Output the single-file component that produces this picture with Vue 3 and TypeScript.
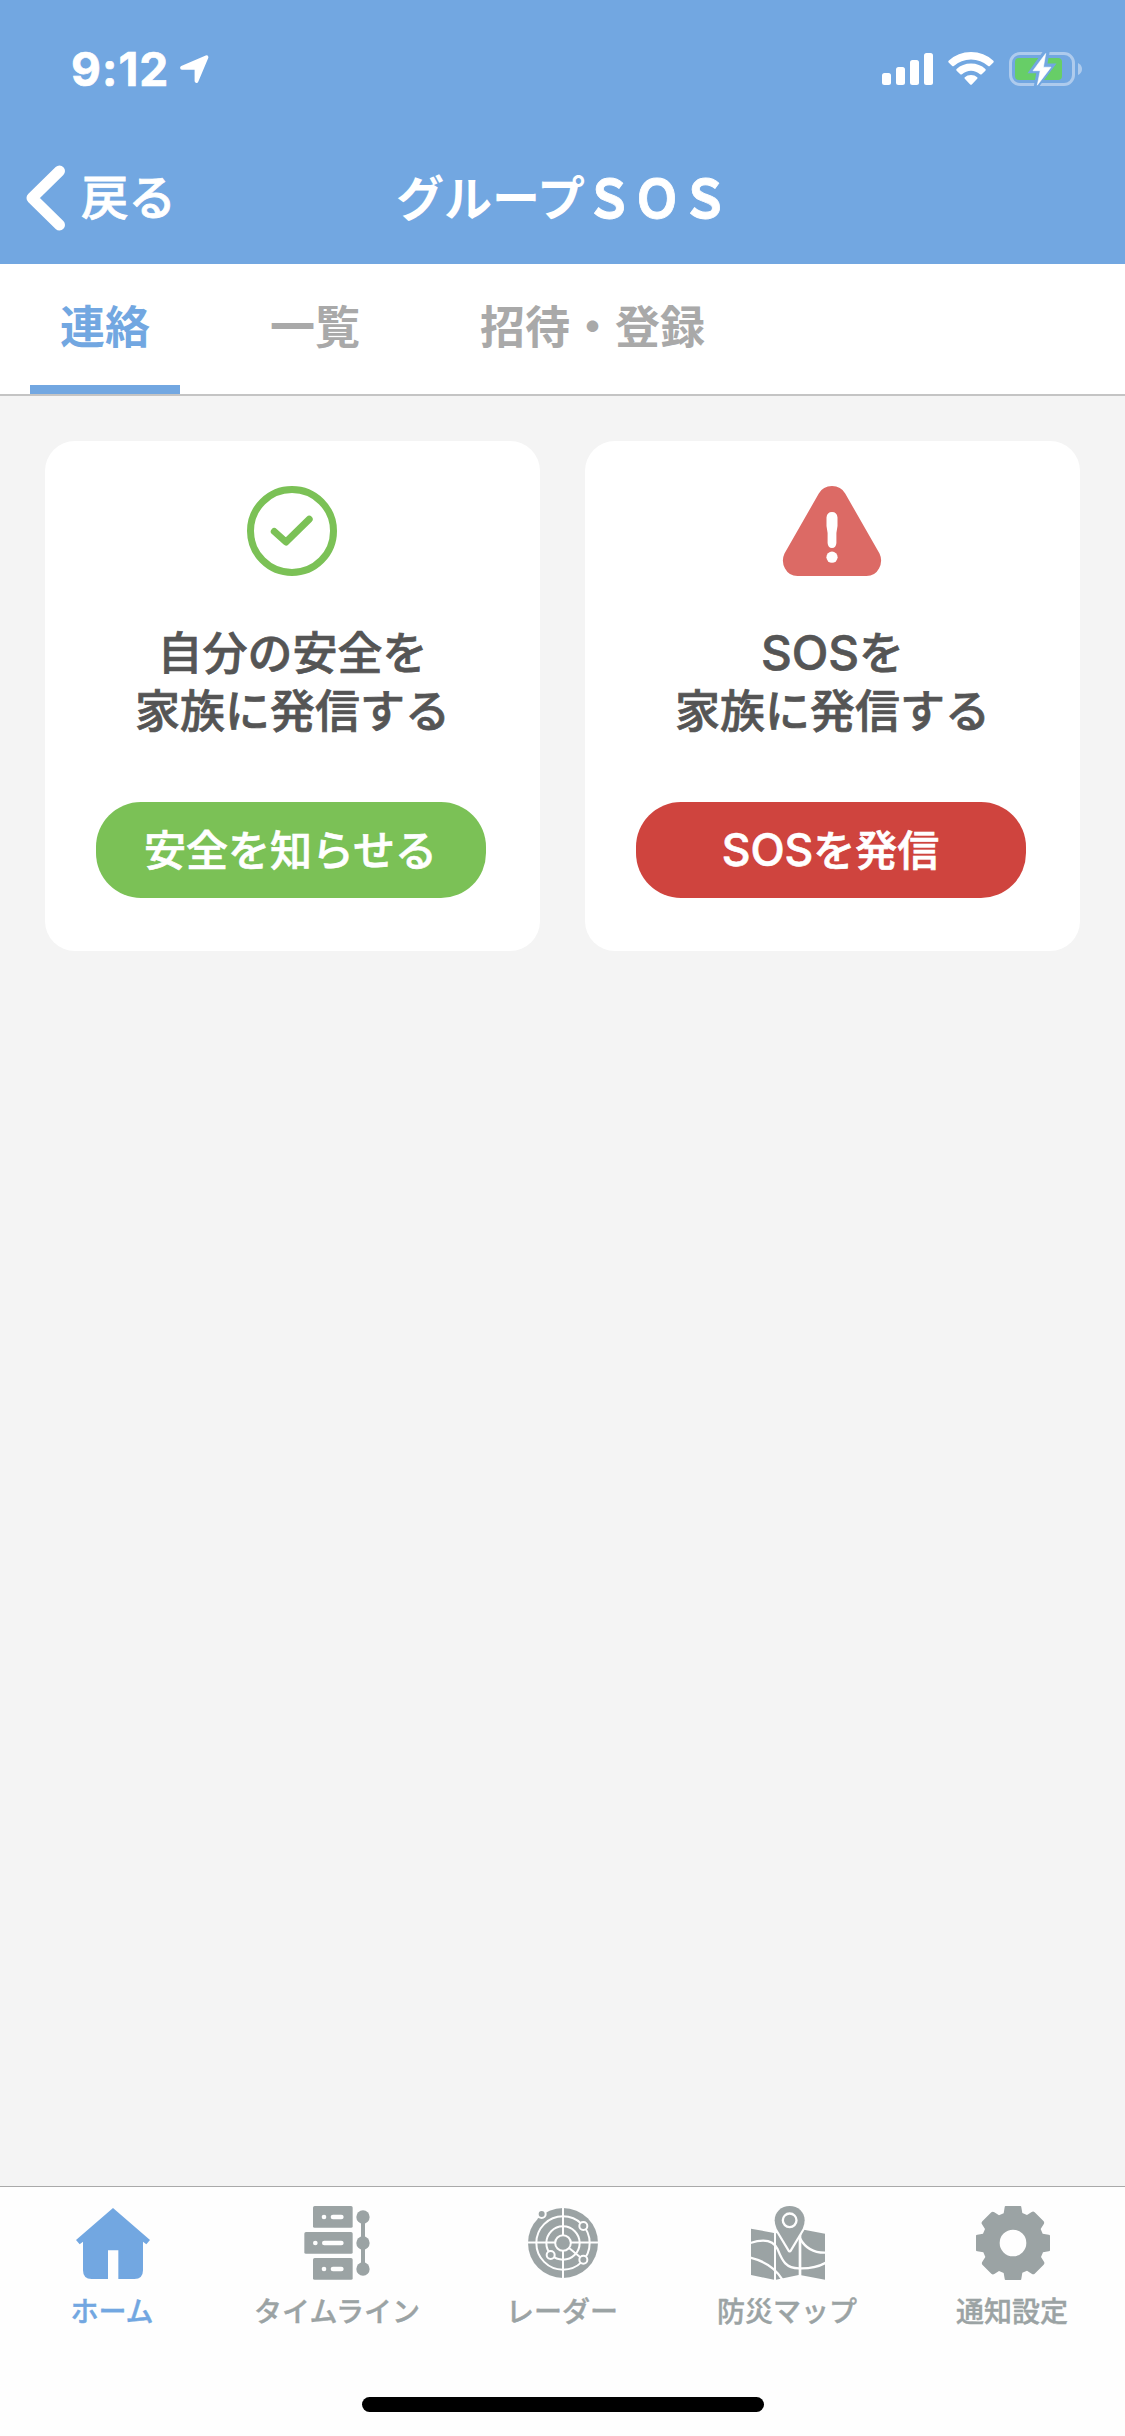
<script setup lang="ts">
interface Tab {
  label: string
  active: boolean
}

interface NavItem {
  id: string
  label: string
  viewBox: string
}

const tabs: Tab[] = [
  { label: '連絡', active: true },
  { label: '一覧', active: false },
  { label: '招待・登録', active: false },
]

const navItems: NavItem[] = [
  { id: 'home', label: 'ホーム', viewBox: '105 108 225 222' },
  { id: 'timeline', label: 'タイムライン', viewBox: '780 108 225 222' },
  { id: 'radar', label: 'レーダー', viewBox: '135 108 225 222' },
  { id: 'map', label: '防災マップ', viewBox: '810 108 225 222' },
  { id: 'settings', label: '通知設定', viewBox: '-114 -111 225 222' },
]

// One quarter of the gear outline; the other three are rotations of it.
const gearQuarter: [string, number[]][] = [
  ['L', [-22, -111]],
  ['L', [22, -111]],
  ['Q', [25, -111, 25, -107]],
  ['L', [28, -90]],
  ['L', [42, -84]],
  ['L', [56, -93]],
  ['Q', [61, -96, 65, -92]],
  ['L', [92, -65]],
  ['Q', [95, -61, 92, -56]],
  ['L', [83, -42]],
  ['L', [89, -28]],
  ['L', [107, -25]],
  ['Q', [111, -25, 111, -22]],
]

function buildGear(): string {
  const parts: string[] = []
  for (let turn = 0; turn < 4; turn++) {
    for (const [command, coords] of gearQuarter) {
      const out: number[] = []
      for (let i = 0; i < coords.length; i += 2) {
        let x = coords[i]
        let y = coords[i + 1]
        for (let t = 0; t < turn; t++) [x, y] = [-y, x]
        out.push(x, y)
      }
      parts.push(command + out.join(' '))
    }
  }
  return 'M' + parts.join('').slice(1) + 'ZM40 0A40 40 0 1 0 -40 0A40 40 0 1 0 40 0Z'
}

const gearPath = buildGear()
</script>

<template>
  <div class="screen">
    <header class="header">
      <div class="status">
        <div class="status-left">
          <span class="time">9:12</span>
          <svg class="location" width="32" height="32" viewBox="0 0 32 32">
            <path d="M3 14.8L27.5 4.2L17.5 28V14.8Z" fill="#fff" stroke="#fff" stroke-width="3.8" stroke-linejoin="round" />
          </svg>
        </div>
        <svg class="indicators" width="202" height="36" viewBox="881 51 202 36">
          <g fill="#fff">
            <rect x="882" y="73" width="9" height="12" rx="2.5" />
            <rect x="896" y="67" width="9" height="18" rx="2.5" />
            <rect x="910" y="60" width="9" height="25" rx="2.5" />
            <rect x="924" y="53" width="9" height="32" rx="2.5" />
            <path d="M948.6 60.7Q958 52 971 52T993.4 60.7Q994.2 61.6 993.4 62.5L989.8 66Q989 66.6 988.2 66Q981 59.4 971 59.4T953.8 66Q953 66.6 952.2 66L948.6 62.5Q947.8 61.6 948.6 60.7Z" />
            <path d="M956.6 69Q962.5 63.5 971 63.5T985.4 69Q986.2 69.9 985.4 70.7L981.7 74.2Q981 74.9 980 74.2Q976 70.7 971 70.7T962 74.2Q961 74.9 960.3 74.2L956.6 70.7Q955.8 69.9 956.6 69Z" />
            <path d="M964.8 77.3Q967.2 75 971 75T977.2 77.3Q978 78 977.2 78.8L971.8 84.4Q971 85.2 970.2 84.4L964.8 78.8Q964 78 964.8 77.3Z" />
          </g>
          <rect x="1010.5" y="53.5" width="63" height="31" rx="9.5" fill="none" stroke="#aecbed" stroke-width="3" />
          <path d="M1078 63Q1082 65 1082 69T1078 75Z" fill="#aecbed" />
          <rect x="1015" y="58" width="47" height="22" rx="4" fill="#67ce67" />
          <path d="M1044 50L1027.5 73.3H1036.2L1033.5 88H1038L1056.5 63.5H1047.5L1050 50Z" fill="#72a7e1" />
          <path d="M1045.7 53.5L1033 70.7H1040.2L1037.3 85.2L1051 67.2H1043.4Z" fill="#fff" stroke="#fff" stroke-width=".6" />
        </svg>
      </div>
      <div class="navbar">
        <div class="back">
          <svg width="44" height="70" viewBox="24 163.5 44 70">
            <path d="M59.5 171.5L32 198.5L59.5 225.5" fill="none" stroke="#fff" stroke-width="11" stroke-linecap="round" stroke-linejoin="round" />
          </svg>
          <span>戻る</span>
        </div>
        <h1 class="title">グループ<span class="wide-latin">ＳＯＳ</span></h1>
      </div>
    </header>

    <nav class="tabs">
      <div v-for="tab in tabs" :key="tab.label" class="tab" :class="{ active: tab.active }">
        <span>{{ tab.label }}</span>
      </div>
    </nav>

    <main class="content">
      <section class="card">
        <svg class="card-icon" width="90" height="90" viewBox="0 0 90 90" fill="none" stroke="#7bc156">
          <circle cx="45" cy="45" r="41.5" stroke-width="7" />
          <path d="M27.3 45.5L39 56L62.2 33.2" stroke-width="7" stroke-linecap="round" stroke-linejoin="round" />
        </svg>
        <p class="card-text">自分の安全を<br />家族に発信する</p>
        <button class="button safe">安全を知らせる</button>
      </section>
      <section class="card">
        <svg class="card-icon" width="100" height="90" viewBox="0 0 100 90">
          <path d="M36.8 7.5Q41 0 50 0T63.2 7.5L97.5 67.5Q101 75 97 82.5T84.5 90H15.5Q7 90 3 82.5T2.5 67.5Z" fill="#dc6a65" />
          <path d="M44.5 31.5Q45 26 50 26T55.5 31.5V40L54.4 47V57Q54 62 50 62T45.6 57V47L44.5 40Z" fill="#fff" />
          <circle cx="50" cy="71.2" r="5.6" fill="#fff" />
        </svg>
        <p class="card-text"><span class="latin">SOS</span>を<br />家族に発信する</p>
        <button class="button sos"><span class="latin">SOS</span>を発信</button>
      </section>
    </main>

    <footer class="footer">
      <nav class="bottom-nav">
        <div v-for="item in navItems" :key="item.id" class="nav-item" :class="{ active: item.id === 'home' }">
          <svg width="75" height="74" :viewBox="item.viewBox" fill="currentColor">
            <path
              v-if="item.id === 'home'"
              d="M219 114L330 210L319 223L309 215V301Q309 327 283 327H235V241H204V327H155Q129 327 129 301V215L119 223L108 210Z"
            />
            <template v-else-if="item.id === 'timeline'">
              <rect x="819" y="108" width="119" height="65.5" rx="5" />
              <rect x="793" y="186" width="145" height="65.5" rx="5" />
              <rect x="819" y="264" width="119" height="65.5" rx="5" />
              <circle cx="969" cy="141" r="20" />
              <circle cx="969" cy="219" r="20" />
              <circle cx="969" cy="297" r="20" />
              <rect x="963" y="141" width="12" height="156" />
              <g fill="#fefefe">
                <circle cx="852" cy="141" r="7" />
                <circle cx="826" cy="219" r="7" />
                <circle cx="852" cy="297" r="7" />
                <rect x="872" y="134" width="39" height="14" rx="7" />
                <rect x="846" y="212" width="65" height="14" rx="7" />
                <rect x="872" y="290" width="39" height="14" rx="7" />
              </g>
            </template>
            <template v-else-if="item.id === 'radar'">
              <circle cx="249" cy="219" r="105" />
              <g fill="none" stroke="#fefefe" stroke-width="6">
                <circle cx="249" cy="219" r="80" />
                <circle cx="249" cy="219" r="50" />
                <path d="M249 110V328M140 217.5H358M249 219L310 269" />
              </g>
              <g stroke="#fefefe" stroke-width="6">
                <circle cx="249" cy="219" r="23.5" />
                <circle cx="310" cy="168" r="12" />
                <circle cx="310" cy="269" r="12" />
                <circle cx="212" cy="255" r="12" />
                <circle cx="185" cy="132" r="12" />
              </g>
            </template>
            <template v-else-if="item.id === 'map'">
              <path d="M813 176L882 189V329L813 315Z" />
              <path d="M888 190L956 178V315L888 329Z" />
              <path d="M964 178L1035 191V329L964 316Z" />
              <g fill="none" stroke="#fefefe" stroke-width="7">
                <path d="M811 219C850 206 880 210 893 238C908 275 918 294 957 295C990 296 1015 291 1037 278" />
                <path d="M811 263C855 274 889 298 907 329" />
                <path d="M960 205C978 238 1005 249 1037 248" />
              </g>
              <path
                d="M929 241L890 176Q884 164 884 151C884 126 904 108 929 108S974 126 974 151Q974 164 968 176Z"
                stroke="#fefefe"
                stroke-width="13"
                stroke-linejoin="round"
              />
              <path d="M929 241L890 176Q884 164 884 151C884 126 904 108 929 108S974 126 974 151Q974 164 968 176Z" />
              <circle cx="929" cy="151" r="20.5" fill="none" stroke="#fefefe" stroke-width="7" />
            </template>
            <path v-else :d="gearPath" fill-rule="evenodd" />
          </svg>
          <span class="nav-label">{{ item.label }}</span>
        </div>
      </nav>
      <div class="home-indicator"></div>
    </footer>
  </div>
</template>

<style>
body {
  margin: 0;
}
</style>

<style scoped>
.screen {
  display: flex;
  flex-direction: column;
  width: 1125px;
  height: 2436px;
  overflow: hidden;
  background: #f4f4f4;
  font-family: "Noto Sans CJK JP", sans-serif;
}

.header {
  height: 264px;
  background: #72a7e1;
  color: #fff;
}

.status {
  display: flex;
  justify-content: space-between;
  align-items: center;
  height: 138px;
  padding: 0 42px 0 71px;
}

.status-left {
  display: flex;
  align-items: center;
  gap: 10px;
}

.time {
  font: 700 46px/1 Inter, sans-serif;
  letter-spacing: 1.1px;
  -webkit-text-stroke: 0.7px currentColor;
}

.navbar {
  display: grid;
  grid-template-columns: 1fr auto 1fr;
  align-items: center;
  height: 120px;
}

.back {
  display: flex;
  align-items: center;
  gap: 13px;
  padding-left: 24px;
  font-size: 47.5px;
  font-weight: 500;
  line-height: 70px;
  -webkit-text-stroke: 0.8px currentColor;
}

.back span,
.title {
  padding-bottom: 6px;
}

.title {
  margin: 0;
  font-size: 48px;
  font-weight: 700;
  line-height: 70px;
}

.wide-latin {
  display: inline-block;
  transform: translateY(3px) scaleY(1.1);
  transform-origin: 50% 90%;
  -webkit-text-stroke: 0.8px currentColor;
}

.tabs {
  display: flex;
  gap: 60px;
  height: 130px;
  padding-left: 30px;
  border-bottom: 2px solid #c4c4c4;
  background: #fff;
}

.tab {
  box-sizing: border-box;
  padding: 0 30px;
  border-bottom: 9px solid transparent;
  color: #a9a9a9;
  font-size: 45px;
  font-weight: 700;
  line-height: 121px;
}

.tab.active {
  border-color: #72a7e1;
  color: #72a7e1;
}

.content {
  display: flex;
  flex: 1;
  align-items: flex-start;
  gap: 45px;
  padding: 45px;
}

.card {
  display: flex;
  flex-direction: column;
  align-items: center;
  box-sizing: border-box;
  width: 495px;
  height: 510px;
  padding-top: 45px;
  border-radius: 30px;
  background: #fff;
}

.card-icon {
  margin-right: 1px;
}

.card-text {
  height: 115px;
  margin: 46px 0 65px;
  color: #555;
  font-size: 45px;
  font-weight: 500;
  line-height: 57.5px;
  text-align: center;
  -webkit-text-stroke: 0.7px currentColor;
}

.latin {
  font-family: Inter, sans-serif;
  font-size: 1.06em;
  font-weight: 500;
  line-height: 1;
}

.button {
  width: 390px;
  height: 96px;
  margin-right: 3px;
  padding: 0 1px 5px 0;
  border: 0;
  border-radius: 45px;
  color: #fff;
  font: 500 42px/60px "Noto Sans CJK JP", sans-serif;
  -webkit-text-stroke: 0.7px currentColor;
}

.safe {
  background: #7bc156;
}

.sos {
  background: #cf443e;
}

.footer {
  display: flex;
  flex-direction: column;
  align-items: center;
  justify-content: space-between;
  box-sizing: border-box;
  height: 250px;
  padding-bottom: 24px;
  border-top: 1px solid #a9a9a9;
  background: #fefefe;
}

.bottom-nav {
  display: flex;
  width: 100%;
  padding-top: 19px;
}

.nav-item {
  display: flex;
  flex: 1 1 0;
  flex-direction: column;
  align-items: center;
  gap: 10px;
  color: #9ba3a4;
  font-size: 28px;
  font-weight: 500;
  line-height: 40px;
  white-space: nowrap;
}

.nav-label {
  margin-right: 1px;
  -webkit-text-stroke: 0.4px currentColor;
}

.nav-item.active {
  color: #72a7e1;
}

.home-indicator {
  width: 402px;
  height: 15px;
  border-radius: 8px;
  background: #000;
}
</style>
